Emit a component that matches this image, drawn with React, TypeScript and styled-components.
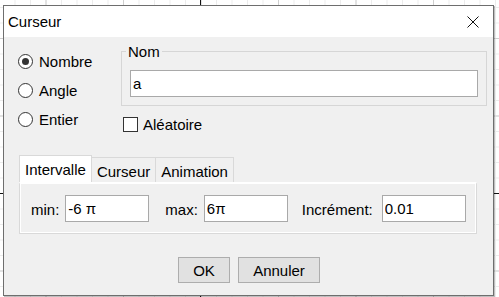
import React, { useState } from 'react'
import styled, { createGlobalStyle } from 'styled-components'

const GlobalStyle = createGlobalStyle`
  html, body {
    margin: 0;
    padding: 0;
  }
  body {
    font-family: 'Liberation Sans', Arial, sans-serif;
    font-size: 15px;
    color: #000;
  }
`

const Canvas = styled.div`
  width: 499px;
  height: 297px;
  overflow: hidden;
  box-sizing: border-box;
  padding: 5px 0 0 3px;
  background-color: #fff;
  background-image: linear-gradient(to right, transparent 200px, #111 200px, #111 201px, transparent 201px),
    linear-gradient(to bottom, transparent 193px, #111 193px, #111 194px, transparent 194px),
    linear-gradient(to right, #cfcfcf 1px, transparent 1px),
    linear-gradient(to bottom, #cfcfcf 1px, transparent 1px),
    linear-gradient(to right, #ececec 1px, transparent 1px),
    linear-gradient(to bottom, #ececec 1px, transparent 1px);
  background-size: 100% 100%, 100% 100%, 77.5px 77.5px, 77.5px 77.5px, 15.5px 15.5px, 15.5px 15.5px;
  background-position: 0 0, 0 0, 45.5px 38px, 45.5px 38px, 14.5px 7px, 14.5px 7px;
`

const Window = styled.div`
  width: 491px;
  height: 291px;
  box-sizing: border-box;
  border: 1px solid #6e6e6e;
  box-shadow: 1px 1px 0 rgba(0, 0, 0, 0.25);
  background: #f0f0f0;
  display: flex;
  flex-direction: column;
`

const TitleBar = styled.div`
  height: 31px;
  background: #fff;
  display: flex;
  align-items: center;
  justify-content: space-between;
  padding: 0 14px 0 4px;
  font-size: 15px;
`

const CloseButton = styled.button`
  border: none;
  background: none;
  padding: 0;
  width: 12px;
  height: 12px;
  display: flex;
  margin-top: 1px;
`

const Top = styled.div`
  display: flex;
  align-items: flex-start;
  padding: 6px 0 0 14px;
`

const RadioColumn = styled.div`
  width: 103px;
  margin-top: 4px;
  display: flex;
  flex-direction: column;
`

const RadioRow = styled.label`
  height: 29px;
  display: flex;
  align-items: center;
  gap: 6px;
`

const RadioCircle = styled.span<{ $checked: boolean }>`
  width: 15px;
  height: 15px;
  box-sizing: border-box;
  border: 1px solid #333;
  border-radius: 50%;
  background: #fff;
  display: flex;
  align-items: center;
  justify-content: center;
  &::after {
    content: '';
    width: 7px;
    height: 7px;
    border-radius: 50%;
    background: ${(p) => (p.$checked ? '#333' : 'transparent')};
  }
`

const RightColumn = styled.div`
  display: flex;
  flex-direction: column;
`

const NameGroup = styled.fieldset`
  width: 366px;
  box-sizing: border-box;
  margin: 0;
  min-width: 0;
  border: 1px solid #d6d6d6;
  padding: 10px 8px 8px 8px;
`

const NameLegend = styled.legend`
  padding: 0 2px;
  margin-left: -4px;
  line-height: 17px;
`

const TextInput = styled.input<{ $width: string }>`
  width: ${(p) => p.$width};
  height: 27px;
  box-sizing: border-box;
  border: 1px solid #a9a9a9;
  background: #fff;
  font-family: 'Liberation Sans', Arial, sans-serif;
  font-size: 15px;
  padding: 0 2px;
  color: #000;
  outline: none;
`

const CheckRow = styled.label`
  display: flex;
  align-items: center;
  gap: 5px;
  margin: 10px 0 0 2px;
  height: 17px;
`

const CheckBox = styled.span`
  width: 15px;
  height: 15px;
  box-sizing: border-box;
  border: 1px solid #333;
  background: #fff;
`

const Tabs = styled.div`
  margin: 21px 0 0 15px;
  width: 458px;
  display: flex;
  flex-direction: column;
`

const TabStrip = styled.div`
  display: flex;
  align-items: flex-end;
  height: 27px;
`

const Tab = styled.div<{ $active: boolean }>`
  height: ${(p) => (p.$active ? '27px' : '25px')};
  box-sizing: border-box;
  padding: 0 5px;
  margin-left: -1px;
  display: flex;
  align-items: center;
  border: 1px solid #d9d9d9;
  border-bottom: none;
  background: ${(p) => (p.$active ? '#fff' : '#f0f0f0')};
  position: relative;
  z-index: ${(p) => (p.$active ? 1 : 0)};
  padding-top: ${(p) => (p.$active ? '0' : '2px')};
  &:first-child {
    margin-left: 0;
  }
`

const Panel = styled.div`
  height: 52px;
  box-sizing: border-box;
  border: 1px solid #d9d9d9;
  border-top: 2px solid #fff;
  box-shadow: inset 1px 0 0 #fff, inset -1px -1px 0 #fff;
  display: flex;
  align-items: center;
  padding: 0 0 1px 11px;
`

const Field = styled.div<{ $offset: number }>`
  display: flex;
  align-items: center;
  gap: 6px;
  margin-left: ${(p) => p.$offset}px;
`

const FieldLabel = styled.span<{ $extra?: number }>`
  margin-right: ${(p) => p.$extra ?? 0}px;
  padding-top: 2px;
`

const Buttons = styled.div`
  display: flex;
  justify-content: center;
  gap: 8px;
  margin-top: 23px;
  padding-left: 1px;
`

const Button = styled.button<{ $width: number }>`
  width: ${(p) => p.$width}px;
  height: 26px;
  box-sizing: border-box;
  border: 1px solid #adadad;
  background: #e1e1e1;
  font-family: 'Liberation Sans', Arial, sans-serif;
  font-size: 15px;
  color: #000;
  padding: 1px 0 0;
`

const modes = ['Nombre', 'Angle', 'Entier']
const tabs = ['Intervalle', 'Curseur', 'Animation']

export default function App() {
  const [mode, setMode] = useState('Nombre')
  const [tab, setTab] = useState('Intervalle')

  return (
    <Canvas>
      <GlobalStyle />
      <Window>
        <TitleBar>
          <span>Curseur</span>
          <CloseButton aria-label="Fermer">
            <svg width="12" height="12" viewBox="0 0 12 12">
              <path d="M0.5 0.5 L11.5 11.5 M11.5 0.5 L0.5 11.5" stroke="#111" strokeWidth="1" fill="none" />
            </svg>
          </CloseButton>
        </TitleBar>
        <Top>
          <RadioColumn>
            {modes.map((m) => (
              <RadioRow key={m} onClick={() => setMode(m)}>
                <RadioCircle $checked={mode === m} />
                {m}
              </RadioRow>
            ))}
          </RadioColumn>
          <RightColumn>
            <NameGroup>
              <NameLegend>Nom</NameLegend>
              <TextInput $width="100%" defaultValue="a" />
            </NameGroup>
            <CheckRow>
              <CheckBox />
              Aléatoire
            </CheckRow>
          </RightColumn>
        </Top>
        <Tabs>
          <TabStrip>
            {tabs.map((t) => (
              <Tab key={t} $active={tab === t} onClick={() => setTab(t)}>
                {t}
              </Tab>
            ))}
          </TabStrip>
          <Panel>
            <Field $offset={0}>
              <FieldLabel>min:</FieldLabel>
              <TextInput $width="84px" defaultValue="-6 π" />
            </Field>
            <Field $offset={16}>
              <FieldLabel>max:</FieldLabel>
              <TextInput $width="84px" defaultValue="6π" />
            </Field>
            <Field $offset={14}>
              <FieldLabel $extra={3}>Incrément:</FieldLabel>
              <TextInput $width="84px" defaultValue="0.01" />
            </Field>
          </Panel>
        </Tabs>
        <Buttons>
          <Button $width={52}>OK</Button>
          <Button $width={82}>Annuler</Button>
        </Buttons>
      </Window>
    </Canvas>
  )
}
